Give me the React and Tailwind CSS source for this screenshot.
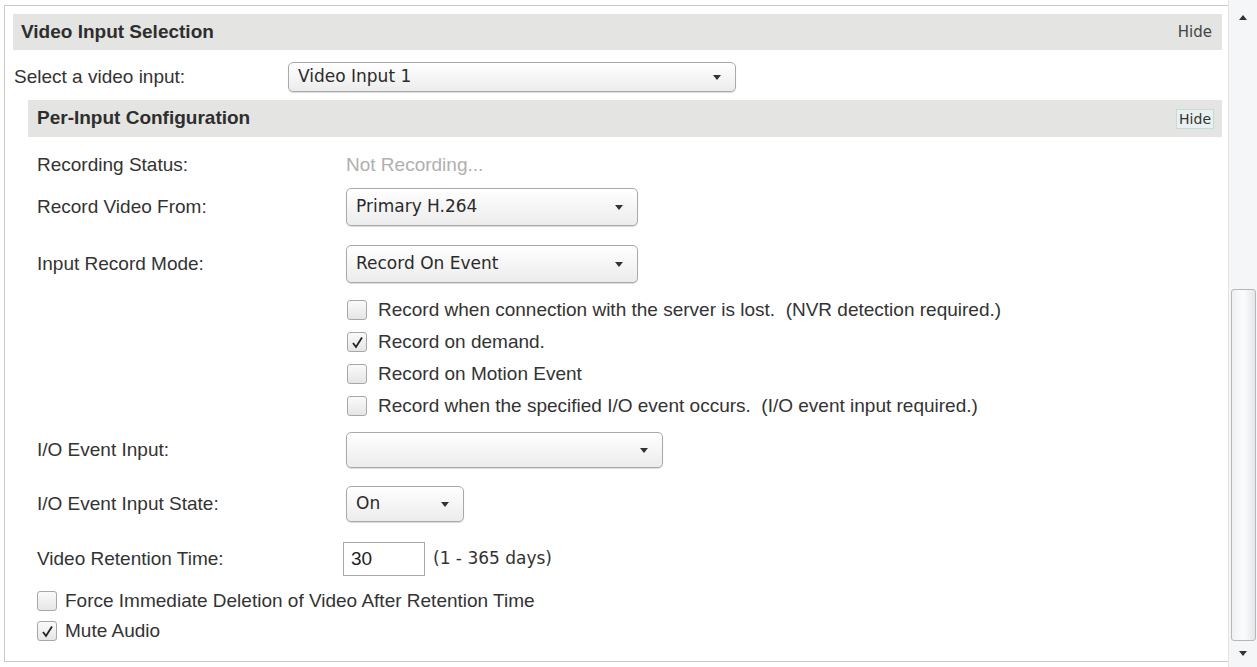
const sans = { fontFamily: '"Liberation Sans", Arial, sans-serif' }

function Arrow() {
  return (
    <svg width="8" height="5" viewBox="0 0 8 5" className="shrink-0">
      <path d="M0 0 L8 0 L4 5 Z" fill="#333" />
    </svg>
  )
}

function Select({ value, className }) {
  return (
    <div
      className={`flex items-center justify-between rounded-[5px] border border-[#a9a9a9] bg-linear-to-b from-white to-[#ececec] pl-[9px] pr-[14px] font-['DejaVu_Sans',sans-serif] text-[17px] text-[#2a2a2a] shadow-[0_1px_1px_rgba(0,0,0,0.15)] ${className}`}
    >
      <span>{value}</span>
      <Arrow />
    </div>
  )
}

function Check({ checked }) {
  return (
    <span className="flex h-[20px] w-[20px] shrink-0 items-center justify-center rounded-[3px] border border-[#a7a7a7] bg-linear-to-b from-[#fafafa] to-[#e6e6e6]">
      {checked ? (
        <svg width="13" height="13" viewBox="0 0 13 13">
          <path d="M2 7 L5 11 L11 1.5" fill="none" stroke="#222" strokeWidth="1.8" />
        </svg>
      ) : null}
    </span>
  )
}

function Row({ label, children, className }) {
  return (
    <div className={`flex items-center ${className}`}>
      <div className="w-[309px] shrink-0 text-[19px] text-[#333]">{label}</div>
      {children}
    </div>
  )
}

const options = [
  { text: 'Record when connection with the server is lost.  (NVR detection required.)', checked: false },
  { text: 'Record on demand.', checked: true },
  { text: 'Record on Motion Event', checked: false },
  { text: 'Record when the specified I/O event occurs.  (I/O event input required.)', checked: false },
]

export default function App() {
  return (
    <div className="flex h-[667px] w-[1257px] bg-white" style={sans}>
      <div className="flex-1 py-[5px] pl-[4px]">
        <div className="h-full border-y border-l border-[#c9c9c9] pl-[8px] pr-[6px] pt-[8px]">
          <div className="flex h-[36px] items-center justify-between bg-[#e4e4e2] pl-[8px] pr-[10px]">
            <span className="text-[19px] font-bold text-[#2e2e2e]">Video Input Selection</span>
            <span className="font-['DejaVu_Sans',sans-serif] text-[15px] text-[#444]">Hide</span>
          </div>

          <div className="mt-[12px] flex h-[30px] items-center">
            <div className="w-[275px] shrink-0 pl-[1px] text-[19px] text-[#333]">Select a video input:</div>
            <Select value="Video Input 1" className="h-[30px] w-[448px]" />
          </div>

          <div className="ml-[15px] mt-[8px]">
            <div className="flex h-[37px] items-center justify-between bg-[#e4e4e2] pl-[9px] pr-[8px]">
              <span className="text-[19px] font-bold text-[#2e2e2e]">Per-Input Configuration</span>
              <span className="border border-[#c3dcd6] bg-[#e8f1ef] px-[2px] font-['DejaVu_Sans',sans-serif] text-[14px] leading-[18px] text-[#333]">
                Hide
              </span>
            </div>

            <div className="pl-[9px]">
              <Row label="Recording Status:" className="mt-[10px] h-[36px]">
                <span className="text-[19px] text-[#b0b0b0]">Not Recording...</span>
              </Row>

              <Row label="Record Video From:" className="mt-[5px] h-[38px]">
                <Select value="Primary H.264" className="h-[38px] w-[292px]" />
              </Row>

              <Row label="Input Record Mode:" className="mt-[19px] h-[38px]">
                <Select value="Record On Event" className="h-[38px] w-[292px]" />
              </Row>

              <div className="mt-[11px] flex flex-col pl-[310px]">
                {options.map((o) => (
                  <label key={o.text} className="flex h-[32px] items-center gap-[11px]">
                    <Check checked={o.checked} />
                    <span className="whitespace-pre text-[19px] text-[#333]">{o.text}</span>
                  </label>
                ))}
              </div>

              <Row label="I/O Event Input:" className="mt-[10px] h-[36px]">
                <Select value="" className="h-[36px] w-[317px]" />
              </Row>

              <Row label="I/O Event Input State:" className="mt-[18px] h-[36px]">
                <Select value="On" className="h-[36px] w-[118px]" />
              </Row>

              <Row label="Video Retention Time:" className="mt-[20px] h-[34px]">
                <div className="-ml-[3px] flex h-[34px] w-[82px] items-center border border-[#a9a9a9] bg-white pl-[7px] text-[19px] text-[#222]">
                  30
                </div>
                <span className="ml-[8px] font-['DejaVu_Sans',sans-serif] text-[17px] text-[#333]">(1 - 365 days)</span>
              </Row>

              <label className="mt-[10px] flex h-[30px] items-center gap-[8px]">
                <Check checked={false} />
                <span className="text-[19px] text-[#333]">Force Immediate Deletion of Video After Retention Time</span>
              </label>
              <label className="flex h-[30px] items-center gap-[8px]">
                <Check checked />
                <span className="text-[19px] text-[#333]">Mute Audio</span>
              </label>
            </div>
          </div>
        </div>
      </div>

      {/* scrollbar */}
      <div className="flex w-[29px] flex-col items-center border-l border-[#e2e2e2] bg-[#f5f6f7] py-[2px]">
        <div className="flex h-[30px] w-full items-center justify-center">
          <svg width="8" height="5" viewBox="0 0 8 5">
            <path d="M0 5 L8 5 L4 0 Z" fill="#333" />
          </svg>
        </div>
        <div className="flex-1" />
        <div className="h-[352px] w-[25px] rounded-[3px] border border-[#b4b8bc] bg-linear-to-r from-[#eef1f4] via-[#fbfcfd] to-[#e4e7ea]" />
        <div className="flex h-[24px] w-full items-center justify-center">
          <svg width="8" height="5" viewBox="0 0 8 5">
            <path d="M0 0 L8 0 L4 5 Z" fill="#333" />
          </svg>
        </div>
      </div>
    </div>
  )
}
